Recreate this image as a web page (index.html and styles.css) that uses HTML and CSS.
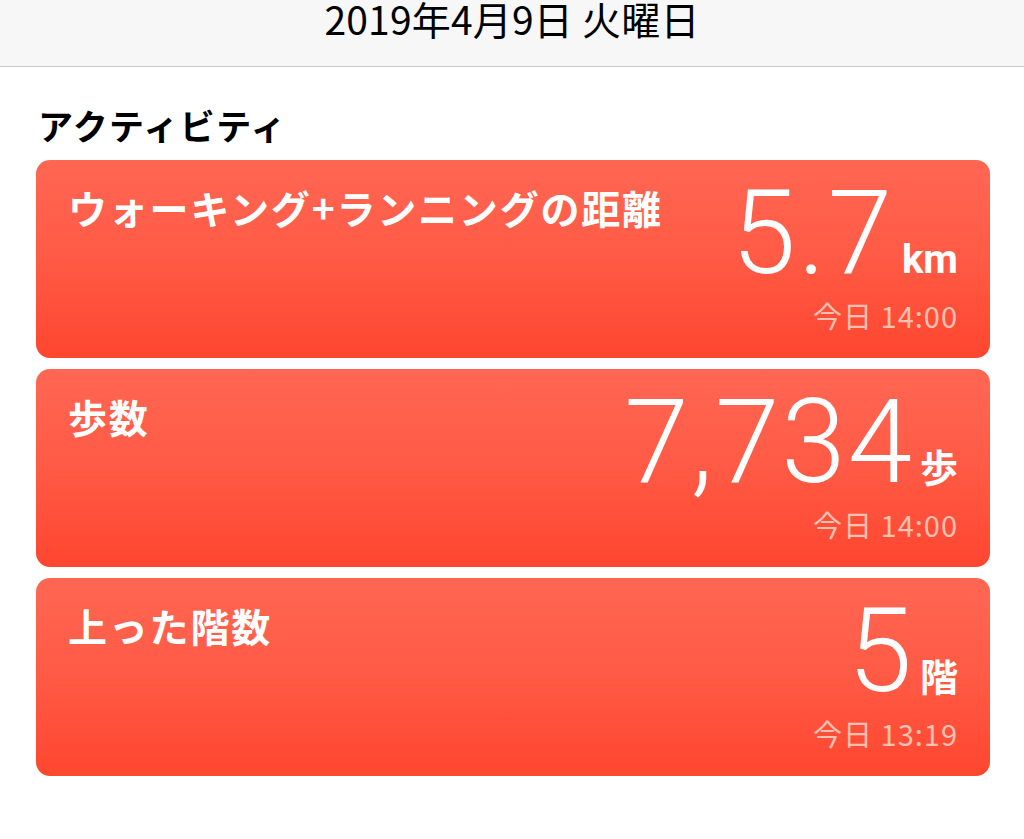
FILE: index.html
```html
<!DOCTYPE html>
<html lang="ja">
<head>
<meta charset="utf-8">
<link rel="stylesheet" href="styles.css">
</head>
<body>
<header class="topbar"><div class="date">2019年4月9日 火曜日</div></header>
<main class="content">
  <h2 class="section">アクティビティ</h2>
  <div class="card">
    <div class="title">ウォーキング+ランニングの距離</div>
    <div class="right">
      <div class="value"><span class="num">5.7</span><span class="unit unit-en">km</span></div>
      <div class="time">今日 14:00</div>
    </div>
  </div>
  <div class="card">
    <div class="title">歩数</div>
    <div class="right">
      <div class="value"><span class="num">7,734</span><span class="unit">歩</span></div>
      <div class="time">今日 14:00</div>
    </div>
  </div>
  <div class="card">
    <div class="title">上った階数</div>
    <div class="right">
      <div class="value"><span class="num">5</span><span class="unit">階</span></div>
      <div class="time">今日 13:19</div>
    </div>
  </div>
</main>
</body>
</html>
```
FILE: styles.css
```css
* { box-sizing: border-box; }
html, body { margin: 0; padding: 0; background: #ffffff; }
body { font-family: "Noto Sans CJK JP", "Noto Sans", sans-serif; color: #000; }
.topbar {
  height: 67px;
  background: #f7f7f7;
  border-bottom: 1px solid #c9c9c9;
  display: flex;
  justify-content: center;
}
.date {
  font-size: 39px;
  line-height: 34px;
  margin-top: 1px;
  font-weight: 400;
  letter-spacing: 0.2px;
}
.content { padding: 0 34px 0 36px; }
.section {
  margin: 32px 0 0 2px;
  font-size: 35px;
  font-weight: 700;
  line-height: 52px;
  height: 61px;
  letter-spacing: 1.4px;
}
.card {
  height: 198px;
  margin-bottom: 11px;
  border-radius: 14px;
  background: linear-gradient(to bottom, #ff6753 0%, #ff5a45 50%, #ff462f 100%);
  display: flex;
  justify-content: space-between;
  padding: 22px 32px 0 32px;
  color: #fff;
}
.title {
  font-size: 39px;
  font-weight: 700;
  line-height: 50px;
  letter-spacing: 1.8px;
  white-space: nowrap;
}
.right {
  display: flex;
  flex-direction: column;
  align-items: flex-end;
}
.value {
  display: flex;
  align-items: baseline;
  margin-top: 1px;
  line-height: 100px;
}
.num {
  font-family: Roboto, "Noto Sans", sans-serif;
  font-weight: 300;
  font-size: 116px;
  line-height: 100px;
  letter-spacing: 2px;
}
.unit {
  font-size: 38px;
  font-weight: 700;
  line-height: 40px;
  margin-left: 6px;
}
.unit-en { font-family: Roboto, "Noto Sans", sans-serif; font-size: 40px; margin-left: 8px; }
.time {
  font-size: 29px;
  line-height: 36px;
  letter-spacing: 1px;
  color: #ffc1b1;
  margin-top: 14px;
}
```
